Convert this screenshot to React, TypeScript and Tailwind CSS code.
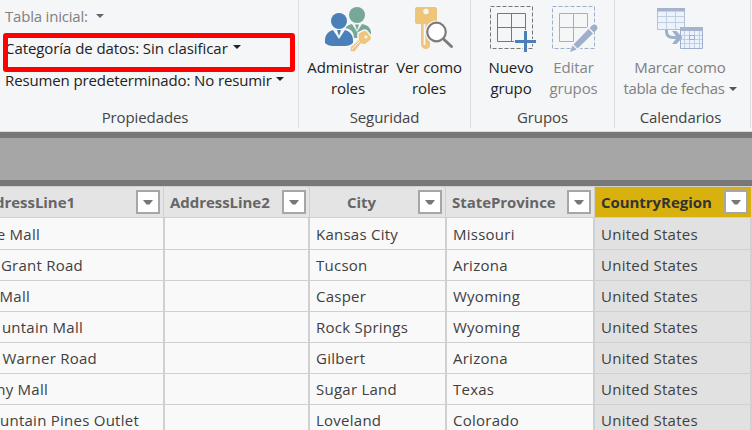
import type { ReactNode } from 'react';

const ribbonFont = "font-['Open_Sans','Liberation_Sans',sans-serif]";

function Caret({ className = '' }: { className?: string }) {
  return (
    <svg className={`h-1 w-2 shrink-0 ${className}`} viewBox="0 0 8 4" fill="currentColor">
      <path d="M0 0h8L4 4z" />
    </svg>
  );
}

function Group({ label, className, children }: { label: string; className: string; children?: ReactNode }) {
  return (
    <section className={`flex h-32 shrink-0 flex-col border-r border-[#dcdfe1] ${className}`}>
      <div className="flex h-[107px]">{children}</div>
      <div className="text-center leading-[21px] text-[#444]">{label}</div>
    </section>
  );
}

type ToolProps = {
  icon: ReactNode;
  lines: [string, string];
  className: string;
  iconClass?: string;
  caret?: boolean;
};

function Tool({ icon, lines, className, iconClass = '', caret }: ToolProps) {
  return (
    <div className={`flex shrink-0 flex-col items-center whitespace-nowrap ${className}`}>
      <div className={`h-[57px] pt-1 ${iconClass}`}>{icon}</div>
      <div className="leading-[21px]">{lines[0]}</div>
      <div className={`flex items-center leading-[21px] ${caret ? 'tracking-[-0.3px]' : ''}`}>
        {lines[1]}
        {caret && <Caret className="ml-1 text-[#555]" />}
      </div>
    </div>
  );
}

const RolesIcon = () => (
  <svg width="48" height="48" viewBox="0 0 48 48">
    <circle cx="33" cy="11" r="8" fill="#76a797" />
    <path d="M20 34V28Q21 21 28 20l5 8 5-8q8 1 9 8v6z" fill="#76a797" />
    <path d="M31 20.500h4l-2 6z" fill="#76a797" />
    <circle cx="15" cy="17" r="9.200" fill="#f5f6f8" />
    <path d="M0 43V34Q1 25 9 24h12q9 1 9 10v9z" fill="#f5f6f8" />
    <circle cx="15" cy="17" r="8" fill="#4a7fb8" />
    <path d="M1 39v-4q1-7 8-9l6 9 6-9q7 2 8 9v4q-3 3-8 3H9q-5 0-8-3z" fill="#4a7fb8" />
    <path d="M13 26h4l-2 6z" fill="#4a7fb8" />
    <path d="M34 29l6-3q2 0 3 1l4 5q1 2 0 4l-6 5-4-1-6 8h-5v-5l8-7z" fill="#efc679" stroke="#f5f6f8" strokeWidth="1.500" />
    <circle cx="42" cy="33" r="1.600" fill="#f5f6f8" />
    <path d="M28 45l8-8" stroke="#f5f6f8" />
  </svg>
);

const ViewIcon = () => (
  <svg width="40" height="48" viewBox="0 0 40 48">
    <path d="M3 3h18q2 0 2 2v13q0 2-2 2h-5v21q0 4-4 4t-5-4V20H3q-2 0-2-2V5q0-2 2-2z" fill="#efc679" />
    <circle cx="12" cy="7.500" r="2.700" fill="#f5f6f8" />
    <path d="M10.500 20v21" stroke="#f5f6f8" strokeWidth="1.700" />
    <circle cx="22.500" cy="28" r="11.500" fill="#f5f6f8" />
    <circle cx="22.500" cy="28" r="9.300" fill="#fff" stroke="#7c7c7c" strokeWidth="2.200" />
    <path d="M29.500 35l8 7.500" stroke="#7c7c7c" strokeWidth="3" strokeLinecap="round" />
  </svg>
);

const NewGroupIcon = () => (
  <svg width="48" height="48" viewBox="0 0 48 48" fill="none">
    <path d="M1.500 2.500h42v42h-42z" stroke="#777" strokeDasharray="4 2" />
    <path d="M8.500 9.500h28v28h-28zM22.500 9.500v28M8.500 23.500h28" stroke="#777" />
    <path d="M34 26h5v9h10v5H39v9h-5v-9h-9v-5h9z" fill="#f5f6f8" />
    <path d="M36.500 27v21M26 37.500h21" stroke="#4a7fb8" strokeWidth="3" />
  </svg>
);

const EditGroupIcon = () => (
  <svg width="48" height="48" viewBox="0 0 48 48" fill="none">
    <path d="M1.500 2.500h42v42h-42z" stroke="#9eafcb" strokeDasharray="4 2" />
    <path d="M8.500 9.500h28v14h-28zM22.500 9.500v28h-14v-14" stroke="#9eafcb" />
    <path d="M20 41L40 19l8 4-21 24z" fill="#f5f6f8" />
    <path d="M19 48l2.500-6.500 4 4zM22.500 40.500l15-15.500 4.500 4.500-15.500 15zM38.500 24l2.500-2.500q2.500-2 4.500 0t0 4.500l-2.500 2.500z" fill="#9eafcb" />
  </svg>
);

const CalendarIcon = () => (
  <svg width="48" height="48" viewBox="0 0 48 48" fill="none">
    <path d="M1.500 4.500h27v21h-27z" fill="#eaf3fe" stroke="#b4c0d4" />
    <path d="M1 4h28v3.500H1z" fill="#a5b3cc" />
    <path d="M10.500 7v18M19.500 7v18M2 12.500h26M2 18.500h26" stroke="#c2cede" />
    <path d="M24.500 23.500h22v21h-22z" fill="#eaf3fe" stroke="#9eafcb" />
    <path d="M24 23h23v4H24z" fill="#a5b3cc" />
    <path d="M28.500 27v17M33.500 27v17M38.500 27v17M43.500 27v17M25 31.500h21M25 35.500h21M25 39.500h21" stroke="#c2cede" />
    <path d="M33.500 31.500h5v4h-5z" stroke="#9eafcb" />
    <path d="M10.500 26v1.500q0 6 7 6h6" stroke="#9eafcb" strokeWidth="3" />
    <path d="M16 27h4.500l6 6.500-6 6.500H16l5-6.500z" fill="#9eafcb" />
  </svg>
);

const columns = [
  { name: 'AddressLine1', head: 'w-[164px]', body: 'w-[165px]' },
  { name: 'AddressLine2', head: 'w-[146px] pl-[6px]', body: 'w-[145px]' },
  { name: 'City', head: 'w-[136px] pl-[37px]', body: 'w-[137px] pl-[6px]' },
  { name: 'StateProvince', head: 'w-[149px] pl-[6px]', body: 'w-[148px] pl-[6px]' },
  { name: 'CountryRegion', head: 'w-[157px] pl-[6px]', body: 'w-[157px] pl-[6px]' },
];

// The first column is scrolled partly out of view, so each address is set by its right end.
const rows = [
  { address: 'e Mall', end: 'w-[40px]', city: 'Kansas City', state: 'Missouri' },
  { address: 'Grant Road', end: 'w-[83px]', city: 'Tucson', state: 'Arizona' },
  { address: 'Mall', end: 'w-[30px]', city: 'Casper', state: 'Wyoming' },
  { address: 'untain Mall', end: 'w-[83px]', city: 'Rock Springs', state: 'Wyoming' },
  { address: 'Warner Road', end: 'w-[97px]', city: 'Gilbert', state: 'Arizona' },
  { address: 'ny Mall', end: 'w-[48px]', city: 'Sugar Land', state: 'Texas' },
  { address: 'untain Pines Outlet', end: 'w-[139px]', city: 'Loveland', state: 'Colorado' },
];

export default function App() {
  return (
    <main className="h-[430px] w-[752px] overflow-hidden bg-[#f9f9f9]">
      <header className={`flex h-[132px] border-b border-[#d9dcdd] bg-[#f5f6f8] text-[15px] tracking-[-0.1px] text-[#222] ${ribbonFont}`}>
        <Group label="Propiedades" className="w-[299px] [&>div:last-child]:pr-2">
          <div className="relative flex w-full flex-col pl-[5px] whitespace-nowrap">
            <div className="flex h-8 items-center gap-2 tracking-[-0.2px] text-[#808080]">Tabla inicial: <Caret className="text-[#666]" /></div>
            <div className="flex h-8 items-center gap-[5px] tracking-[-0.07px]">Categoría de datos: Sin clasificar <Caret className="-mt-0.5" /></div>
            <div className="flex h-8 items-center gap-1 tracking-[-0.12px]">Resumen predeterminado: No resumir <Caret className="-mt-0.5" /></div>
            <div className="absolute top-[33px] left-[3px] h-[39px] w-[292px] rounded-[3px] border-[5px] border-[#fe0000]" />
          </div>
        </Group>
        <Group label="Seguridad" className="w-[172px]">
          <Tool icon={<RolesIcon />} lines={['Administrar', 'roles']} className="ml-[5px] w-[88px]" />
          <Tool icon={<ViewIcon />} lines={['Ver como', 'roles']} className="w-[74px]" iconClass="pl-[10px]" />
        </Group>
        <Group label="Grupos" className="w-[144px]">
          <Tool icon={<NewGroupIcon />} lines={['Nuevo', 'grupo']} className="ml-[9px] w-[62px]" iconClass="pl-1" />
          <Tool icon={<EditGroupIcon />} lines={['Editar', 'grupos']} className="w-[63px] text-[#858585]" iconClass="pl-[3px]" />
        </Group>
        <Group label="Calendarios" className="w-[136px] [&>div:last-child]:pr-1">
          <Tool icon={<CalendarIcon />} lines={['Marcar como', 'tabla de fechas']} className="ml-[6px] w-[118px] text-[#808080]" caret />
        </Group>
      </header>
      <div className="h-[54px] border-y-[6px] border-[#777] bg-[#a6a6a6]" />
      <div className="border-t border-[#d0d0d0] font-['Open_Sans','Liberation_Sans',sans-serif] text-[15px]">
        <div className="flex h-[31px] border-b border-[#d0d0d0] tracking-[-0.05px]">
          {columns.map((c, i) => (
            <div key={c.name} className={`flex shrink-0 items-center justify-between border-r pr-[3px] font-bold ${c.head} ${i === 4 ? 'border-[#d0d0d0] bg-[#d9b10f] text-[#333]' : 'border-[#d0d0d0] bg-[#e4e4e4] text-[#666]'}`}>
              {i === 0 ? <span className="flex w-[75px] justify-end">{'dressLine1'}</span> : c.name}
              <span className="flex size-6 items-center justify-center border-2 border-[#a6a6a6] bg-white">
                <svg className="h-[5px] w-[10px]" viewBox="0 0 10 5" fill="#777"><path d="M0 0h10L6.500 4.500h-3z" /></svg>
              </span>
            </div>
          ))}
        </div>
        {rows.map((r, n) => (
          <div key={r.address} className={`flex leading-[22px] tracking-[0.25px] text-[#404040] ${n === 0 ? 'h-8' : 'h-[31px]'}`}>
            {[r.address, '', r.city, r.state, 'United States'].map((t, i) => (
              <div key={i} className={`shrink-0 border-r-2 border-b border-[#d0d0d0] whitespace-nowrap ${n === 0 ? 'pt-[5px]' : 'pt-1'} ${columns[i].body} ${i === 4 ? 'bg-[#e1e1e1]' : ''}`}>
                {i === 0 ? <span className={`flex justify-end ${r.end}`}>{t}</span> : t}
              </div>
            ))}
          </div>
        ))}
      </div>
    </main>
  );
}
